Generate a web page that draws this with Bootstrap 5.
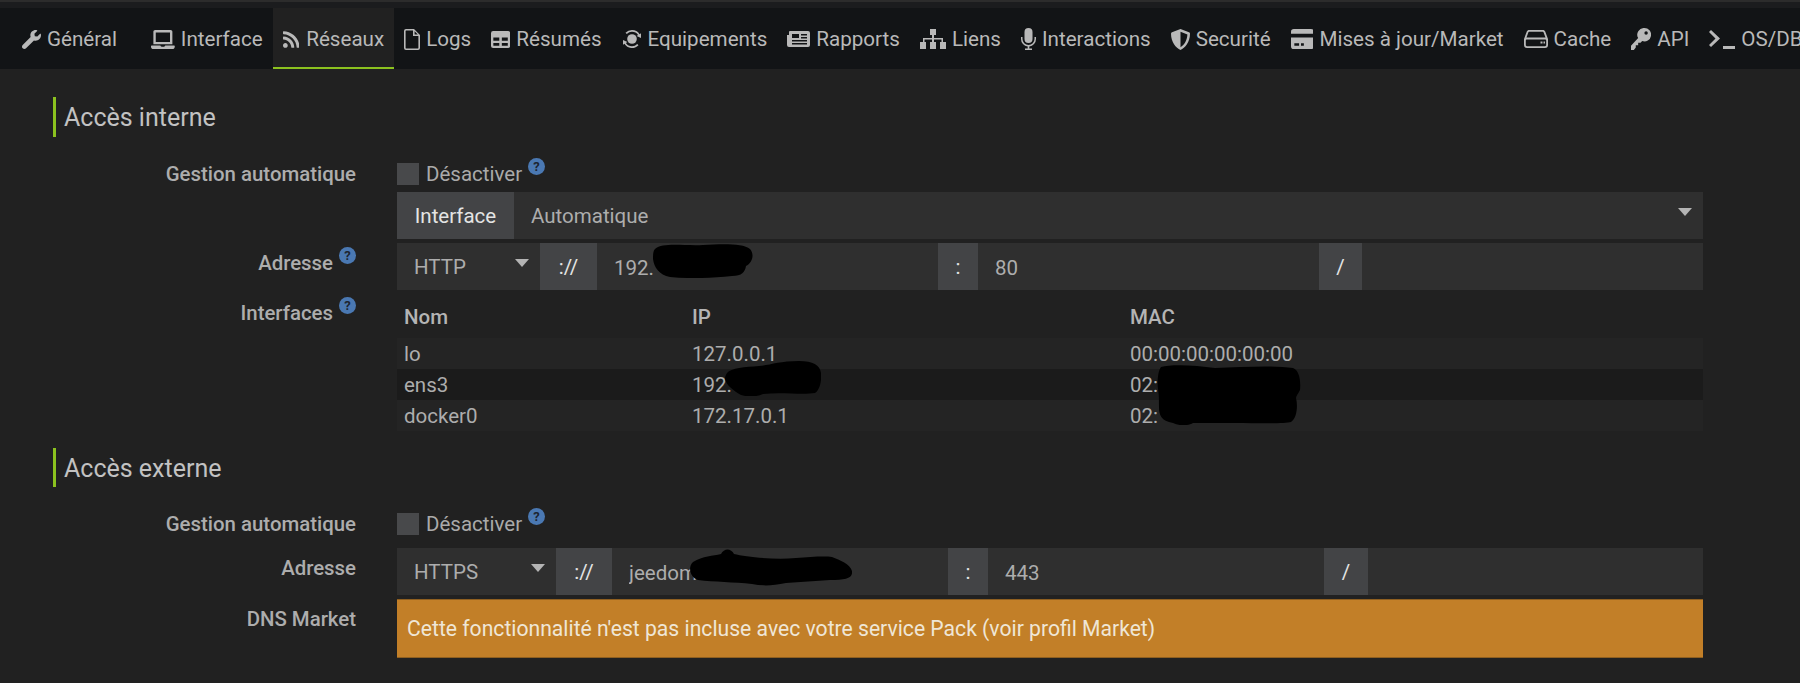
<!DOCTYPE html>
<html lang="fr">
<head>
<meta charset="UTF-8">
<meta name="viewport" content="width=device-width, initial-scale=1.0">
<title>Configuration - Réseaux</title>
<link href="https://cdn.jsdelivr.net/npm/bootstrap@5.3.3/dist/css/bootstrap.min.css" rel="stylesheet"/>
<style>
  html, body { height: 100%; overflow: hidden; }
  body { background: #212121; color: #b4b4b4; font-family: Roboto, "Liberation Sans", sans-serif; font-size: 20.5px; }

  /* onglets */
  .top-strip { height: 8px; background: #1b1c1e; border-top: 2px solid #2c2c2c; }
  .tabs { height: 61px; background: #121416; padding-left: 12px; width: 1900px; }
  .tabs .nav-link { height: 61px; padding: 3px 10px 0; color: #b9b9b9; display: flex; align-items: center; gap: 6px; font-size: 20.6px; white-space: nowrap; border-bottom: 2px solid transparent; }
  .tabs .nav-link.active { background: #212121; border-bottom-color: #8cc21f; gap: 7px; }
  .tabs .first-tab { margin-right: 14px; }
  .tabs svg { fill: #b9b9b9; height: 19px; flex: none; display: block; }

  .page-body { padding: 28px 97px 0 0; }
  .section-title { margin: 0 0 26px 53px; height: 40px; padding-left: 8px; border-left: 3px solid #8cc21f; font-size: 25px; font-weight: 400; line-height: 42px; color: #c2c2c2; }
  .section-title.second { margin-top: 17px; margin-bottom: 26px; height: 39px; }

  .form-line { display: flex; }
  .form-line-label { flex: 0 0 356px; text-align: right; font-weight: 500; font-size: 20.4px; line-height: 22px; color: #adadad; }
  .form-line-value { flex: 1; min-width: 0; margin-left: 41px; position: relative; }

  .fake-check { width: 22px; height: 22px; background: #48494b; flex: none; }
  .help-dot { display: inline-block; position: relative; top: -10px; width: 17px; height: 17px; border-radius: 50%; background: #4a78b2; color: #1d2530; font-size: 13px; font-weight: 700; line-height: 17px; text-align: center; margin-left: 6px; }
  .check-text { margin-left: 7px; line-height: 22px; font-size: 20.5px; color: #aaa; white-space: nowrap; }

  .dark-group { --bs-border-width: 0; height: 47px; flex-wrap: nowrap; }
  .dark-group .form-control, .dark-group .form-select { background-color: #2f2f2f; color: #adadad; border-radius: 0; font-size: 20.5px; padding: 2px 17px 0; height: 47px; box-shadow: none; }
  .dark-group .form-select { background-image: none; flex: none; }
  .dark-group .input-group-text { background: #434446; color: #e4e4e4; border-radius: 0; font-size: 20.5px; justify-content: center; padding: 2px 0 0; flex: none; }
  .select-wrap { position: relative; flex: none; }
  .select-arrow { position: absolute; right: 11px; top: 16px; width: 0; height: 0; border-left: 7px solid transparent; border-right: 7px solid transparent; border-top: 8px solid #b4b4b4; pointer-events: none; }

  .w-proto { width: 143px; } .w-proto2 { width: 159px; }
  .w-sep { width: 57px; } .w-sep2 { width: 56px; }
  .w-colon { width: 40px; } .w-slash { width: 43px; } .w-slash2 { width: 44px; }
  .w-field { flex: none !important; width: 341px !important; } .w-field2 { flex: none !important; width: 336px !important; }
  .w-iface { width: 117px; }

  .scribble { position: absolute; fill: #000; pointer-events: none; }

  .iface-table { --bs-table-bg: transparent; --bs-table-color: #adadad; margin: 0; table-layout: fixed; font-size: 20.5px; line-height: 1.2; }
  .iface-table th, .iface-table td { padding: 0 7px; vertical-align: middle; }
  .iface-table thead th { height: 44px; padding-top: 3px; font-weight: 500; color: #b4b4b4; }
  .iface-table tbody td { height: 31px; padding-top: 1px; background: #242424; }
  .iface-table tbody tr.dark-row td { background: #1b1b1b; }

  .market-alert { background: #c27f28; border: 1px solid #8f5f20; border-width: 1px 0 1px 0; color: #efe6d6; height: 59px; border-radius: 0; margin: 0; padding: 0 10px; font-size: 21.15px; display: flex; align-items: center; }
</style>
</head>
<body>
<div class="top-strip"></div>
<ul class="nav flex-nowrap tabs">
  <li class="nav-item first-tab"><a class="nav-link" href="#"><svg viewBox="0 0 512 512"><path d="M507.73 109.1c-2.24-9.03-13.54-12.09-20.12-5.51l-74.36 74.36-67.88-11.31-11.31-67.88 74.36-74.36c6.62-6.62 3.43-17.9-5.66-20.16-47.38-11.74-99.55.91-136.58 37.93-39.64 39.64-50.55 97.1-34.05 147.2L18.74 402.76c-24.99 24.99-24.99 65.51 0 90.5 24.99 24.99 65.51 24.99 90.5 0l213.21-213.21c50.12 16.71 107.47 5.68 147.37-34.22 37.07-37.07 49.7-89.32 37.91-136.73z"/></svg>Général</a></li>
  <li class="nav-item"><a class="nav-link" href="#"><svg viewBox="0 0 640 512"><path d="M624 416H381.54c-.74 19.81-14.71 32-32.74 32H288c-18.69 0-33.02-17.47-32.77-32H16c-8.8 0-16 7.2-16 16v16c0 35.2 28.8 64 64 64h512c35.2 0 64-28.8 64-64v-16c0-8.8-7.2-16-16-16zM576 48c0-26.4-21.6-48-48-48H112C85.6 0 64 21.6 64 48v336h512V48zm-64 272H128V64h384v256z"/></svg>Interface</a></li>
  <li class="nav-item"><a class="nav-link active" href="#"><svg viewBox="0 0 448 512" style="height:19px"><path d="M128.081 415.959c0 35.369-28.672 64.041-64.041 64.041S0 451.328 0 415.959s28.672-64.041 64.041-64.041 64.04 28.673 64.04 64.041zm175.66 47.25c-8.354-154.6-132.185-278.587-286.95-286.95C7.656 175.765 0 183.105 0 192.253v48.069c0 8.415 6.49 15.472 14.887 16.018 111.832 7.284 201.473 96.702 208.772 208.772.547 8.397 7.604 14.887 16.018 14.887h48.069c9.149.001 16.489-7.655 15.995-16.79zm144.249.288C439.596 229.677 251.465 40.445 16.503 32.01 7.473 31.686 0 38.981 0 48.016v48.068c0 8.625 6.835 15.645 15.453 15.999 191.179 7.839 344.627 161.316 352.465 352.465.353 8.618 7.373 15.453 15.999 15.453h48.068c9.034-.001 16.329-7.474 16.005-16.504z"/></svg>Réseaux</a></li>
  <li class="nav-item"><a class="nav-link" href="#"><svg viewBox="0 0 16 21" style="height:21px"><path fill-rule="evenodd" d="M2 0h8l6 6v13a2 2 0 0 1-2 2H2a2 2 0 0 1-2-2V2a2 2 0 0 1 2-2zm0 1.6a.4.4 0 0 0-.4.4v17c0 .2.2.4.4.4h12a.4.4 0 0 0 .4-.4V7H9V1.6zm8.6.6V5.4h3.2z"/></svg>Logs</a></li>
  <li class="nav-item"><a class="nav-link" href="#"><svg viewBox="0 0 18 16" style="height:17px"><path fill-rule="evenodd" d="M2 0h14a2 2 0 0 1 2 2v12a2 2 0 0 1-2 2H2a2 2 0 0 1-2-2V2a2 2 0 0 1 2-2zm.2 6.2v2.9h5.6V6.2zm8 0v2.9h5.6V6.2zm-8 5v2.6h5.6v-2.6zm8 0v2.6h5.6v-2.6z"/></svg>Résumés</a></li>
  <li class="nav-item"><a class="nav-link" href="#"><svg viewBox="0 0 20 20" style="height:20px"><path d="M10 1a9 9 0 0 1 7.6 4.2l1.4-1V9l-4.4-1.9 1.5-1A7.2 7.2 0 0 0 10 2.8a7.2 7.2 0 0 0-5.2 2.2L3.500 3.800A9 9 0 0 1 10 1zM1 11l4.400 1.900-1.500 1A7.200 7.200 0 0 0 10 17.200a7.200 7.200 0 0 0 5.200-2.200l1.300 1.200A9 9 0 0 1 2.400 14.800L1 15.800z"/><circle cx="10" cy="10" r="4.800"/></svg>Equipements</a></li>
  <li class="nav-item"><a class="nav-link" href="#"><svg viewBox="0 0 23 16" style="height:16px"><path fill-rule="evenodd" d="M3 0h18a2 2 0 0 1 2 2v12a2 2 0 0 1-2 2H2a2 2 0 0 1-2-2V4h2V1a1 1 0 0 1 1-1zm2 3v4h7V3zm9 0v1.500h6V3zm0 3v1.500h6V6zM5 9v1.500h15V9zm0 3v1.500h15V12z"/></svg>Rapports</a></li>
  <li class="nav-item"><a class="nav-link" href="#"><svg viewBox="0 0 26 21" style="height:21px"><path d="M10 0h6v6h-2v3h9v4h3v7h-6v-7h1.500v-2.400H14V13h2v7h-6v-7h2v-2.400H4.500V13H6v7H0v-7h3V9h9V6h-2z"/></svg>Liens</a></li>
  <li class="nav-item"><a class="nav-link" href="#"><svg viewBox="0 0 15 22" style="height:22px"><path d="M7.500 0a4 4 0 0 1 4 4v7a4 4 0 0 1-8 0V4a4 4 0 0 1 4-4zM1.500 9v2a6 6 0 0 0 12 0V9H15v2a7.500 7.500 0 0 1-6.700 7.400V20.500H11V22H4v-1.500h2.700v-2.100A7.500 7.500 0 0 1 0 11V9z"/></svg>Interactions</a></li>
  <li class="nav-item"><a class="nav-link" href="#"><svg viewBox="0 0 19 21" style="height:21px"><path fill-rule="evenodd" d="M9.500 0l8.500 3.300c.6.2 1 .8 1 1.400C19 13 14 19 9.500 21 5 19 0 13 0 4.700c0-.6.4-1.200 1-1.400zm0 2.800v15.400c3.500-1.900 6.600-6.500 6.900-12.600z"/></svg>Securité</a></li>
  <li class="nav-item"><a class="nav-link" href="#"><svg viewBox="0 0 24 21" style="height:20px"><path fill-rule="evenodd" d="M3 0h18a3 3 0 0 1 3 3v2H0V3a3 3 0 0 1 3-3zM0 9h24v9a3 3 0 0 1-3 3H3a3 3 0 0 1-3-3zm3.500 6v2.500h5V15zm7 0v2.500h3V15z"/></svg>Mises à jour/Market</a></li>
  <li class="nav-item"><a class="nav-link" href="#"><svg viewBox="0 0 24 18" style="height:18px"><path fill-rule="evenodd" d="M5 0h14c1 0 1.800.6 2.200 1.500L24 9v6a3 3 0 0 1-3 3H3a3 3 0 0 1-3-3V9l2.800-7.500C3.200.6 4 0 5 0zm.2 1.800c-.4 0-.7.2-.8.5L2.500 7.600h19l-2-5.300c-.1-.3-.4-.5-.7-.5zM3 9.400c-.7 0-1.200.5-1.200 1.200V15c0 .7.500 1.200 1.200 1.200h18c.7 0 1.200-.5 1.200-1.200v-4.400c0-.7-.5-1.200-1.200-1.200zm13.500 2h2v2.200h-2zm3 0h1.500v2.200h-1.500z"/></svg>Cache</a></li>
  <li class="nav-item"><a class="nav-link" href="#"><svg viewBox="0 0 21 23" style="height:22px"><path fill-rule="evenodd" d="M14 0a7 7 0 1 1-2.300 13.600L10 15.500H7.500V18H5v2.500l-2 2.500H0v-4.500l7.500-8A7 7 0 0 1 14 0zm1.800 3.500a1.800 1.800 0 1 0 0 3.600 1.800 1.800 0 0 0 0-3.600z"/></svg>API</a></li>
  <li class="nav-item"><a class="nav-link" href="#"><svg viewBox="0 0 26 19" style="height:19px"><path d="M0 2l2-2 9 8.500L2 17l-2-2 6.500-6.500zM14 16h12v3H14z"/></svg>OS/DB</a></li>
</ul>

<div class="page-body">
  <h4 class="section-title">Accès interne</h4>

  <div class="form-line" style="height:22px">
    <div class="form-line-label">Gestion automatique</div>
    <div class="form-line-value d-flex"><span class="fake-check"></span><span class="check-text">Désactiver<span class="help-dot">?</span></span></div>
  </div>

  <div class="form-line" style="margin-top:7px">
    <div class="form-line-label"></div>
    <div class="form-line-value">
      <div class="input-group dark-group">
        <span class="input-group-text w-iface">Interface</span>
        <div class="select-wrap flex-grow-1">
          <select class="form-select"><option>Automatique</option></select>
          <span class="select-arrow"></span>
        </div>
      </div>
    </div>
  </div>

  <div class="form-line" style="margin-top:4px">
    <div class="form-line-label" style="padding-top:9px">Adresse<span class="help-dot">?</span></div>
    <div class="form-line-value">
      <div class="input-group dark-group">
        <div class="select-wrap w-proto">
          <select class="form-select"><option>HTTP</option></select>
          <span class="select-arrow"></span>
        </div>
        <span class="input-group-text w-sep">://</span>
        <input class="form-control w-field" value="192.">
        <span class="input-group-text w-colon">:</span>
        <input class="form-control w-field" value="80">
        <span class="input-group-text w-slash">/</span>
        <input class="form-control" value="">
      </div>
      <svg class="scribble" style="left:254px;top:0;width:102px;height:35px" viewBox="0 0 102 35"><path d="M4 6C12-1 32 3 52 2c18-1 40-2 47 4 5 6 2 14-4 17-1 6-4 10-14 10-20 2-40 3-62 1C8 32 3 24 2 16c0-4 0-8 2-10z"/></svg>
    </div>
  </div>

  <div class="form-line" style="margin-top:4px">
    <div class="form-line-label" style="padding-top:8px">Interfaces<span class="help-dot">?</span></div>
    <div class="form-line-value">
      <table class="table table-borderless iface-table">
        <colgroup><col style="width:288px"><col style="width:438px"><col></colgroup>
        <thead><tr><th>Nom</th><th>IP</th><th>MAC</th></tr></thead>
        <tbody>
          <tr><td>lo</td><td>127.0.0.1</td><td>00:00:00:00:00:00</td></tr>
          <tr class="dark-row"><td>ens3</td><td>192.</td><td>02:</td></tr>
          <tr><td>docker0</td><td>172.17.0.1</td><td>02:</td></tr>
        </tbody>
      </table>
      <svg class="scribble" style="left:327px;top:67px;width:97px;height:35px" viewBox="0 0 97 35"><path d="M3 12c4-5 18-6 32-7 12-1 20-5 40-5 14 0 21 4 22 12 1 9-2 18-6 20-12 2-34-1-52 1-6 3-16 3-22 1C10 30 2 24 1 18c0-3 1-4 2-6z"/></svg>
      <svg class="scribble" style="left:760px;top:71px;width:144px;height:60px" viewBox="0 0 144 60"><path d="M4 2c10-3 34-2 54 1 26-1 60-3 78 0 6 2 8 12 7 22-2 4-4 6-4 8 2 8 1 20-5 24-6 2-34 1-56 1-18 0-30 0-42 0-5 3-14 3-20 0C4 56 2 50 2 42c0-8 0-12-1-18C0 16 1 6 4 2z"/></svg>
    </div>
  </div>

  <h4 class="section-title second">Accès externe</h4>

  <div class="form-line" style="height:22px">
    <div class="form-line-label">Gestion automatique</div>
    <div class="form-line-value d-flex"><span class="fake-check"></span><span class="check-text">Désactiver<span class="help-dot">?</span></span></div>
  </div>

  <div class="form-line" style="margin-top:13px">
    <div class="form-line-label" style="padding-top:9px">Adresse</div>
    <div class="form-line-value">
      <div class="input-group dark-group">
        <div class="select-wrap w-proto2">
          <select class="form-select"><option>HTTPS</option></select>
          <span class="select-arrow"></span>
        </div>
        <span class="input-group-text w-sep2">://</span>
        <input class="form-control w-field2" value="jeedom.">
        <span class="input-group-text w-colon">:</span>
        <input class="form-control w-field2" value="443">
        <span class="input-group-text w-slash2">/</span>
        <input class="form-control" value="">
      </div>
      <svg class="scribble" style="left:292px;top:0;width:163px;height:38px" viewBox="0 0 163 38"><path d="M4 14C14 8 24 8 32 6c3-6 10-6 13 0 12 3 40 6 62 4 14-1 28-2 36-1 8 3 18 7 20 14 1 7-6 9-22 9-14 1-30 2-44 3-14 3-24 3-34 1-18-2-38-2-54-4C2 30-2 20 4 14z"/></svg>
    </div>
  </div>

  <div class="form-line" style="margin-top:4px">
    <div class="form-line-label" style="padding-top:9px">DNS Market</div>
    <div class="form-line-value">
      <div class="alert market-alert" role="alert">Cette fonctionnalité n'est pas incluse avec votre service Pack (voir profil Market)</div>
    </div>
  </div>
</div>

<script src="https://cdn.jsdelivr.net/npm/bootstrap@5.3.3/dist/js/bootstrap.bundle.min.js"></script>
</body>
</html>
